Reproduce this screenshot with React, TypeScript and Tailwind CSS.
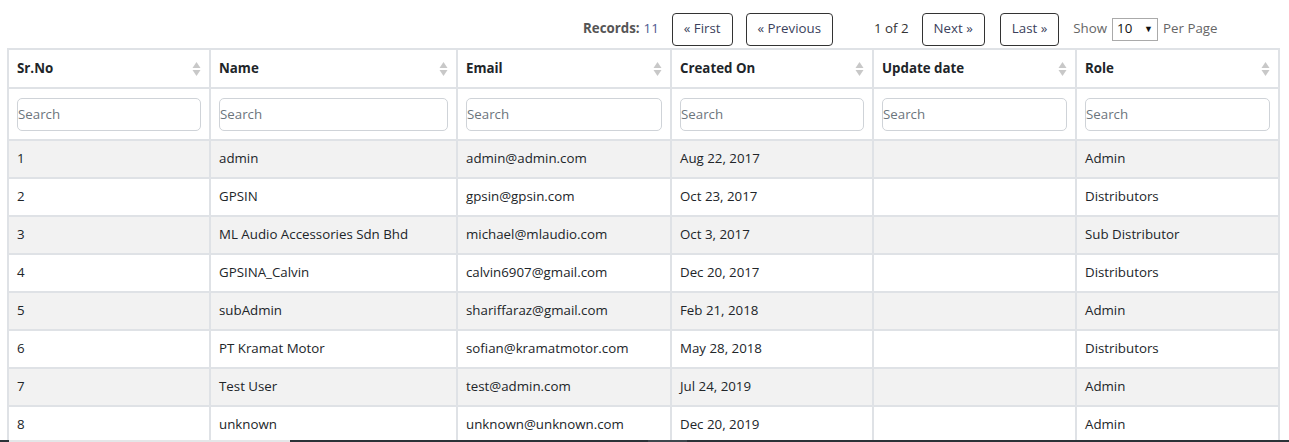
import React from "react";

const users = [
  { id: 1, name: "admin", email: "admin@admin.com", created: "Aug 22, 2017", updated: "", role: "Admin" },
  { id: 2, name: "GPSIN", email: "gpsin@gpsin.com", created: "Oct 23, 2017", updated: "", role: "Distributors" },
  { id: 3, name: "ML Audio Accessories Sdn Bhd", email: "michael@mlaudio.com", created: "Oct 3, 2017", updated: "", role: "Sub Distributor" },
  { id: 4, name: "GPSINA_Calvin", email: "calvin6907@gmail.com", created: "Dec 20, 2017", updated: "", role: "Distributors" },
  { id: 5, name: "subAdmin", email: "shariffaraz@gmail.com", created: "Feb 21, 2018", updated: "", role: "Admin" },
  { id: 6, name: "PT Kramat Motor", email: "sofian@kramatmotor.com", created: "May 28, 2018", updated: "", role: "Distributors" },
  { id: 7, name: "Test User", email: "test@admin.com", created: "Jul 24, 2019", updated: "", role: "Admin" },
  { id: 8, name: "unknown", email: "unknown@unknown.com", created: "Dec 20, 2019", updated: "", role: "Admin" },
];

const columns = [
  { label: "Sr.No", width: "w-[202px]" },
  { label: "Name", width: "w-[247px]" },
  { label: "Email", width: "w-[214px]" },
  { label: "Created On", width: "w-[202px]" },
  { label: "Update date", width: "w-[203px]" },
  { label: "Role", width: "w-[203px]" },
];

const SortIcon = () => (
  <svg width="9" height="16" viewBox="0 0 9 16" className="shrink-0">
    <path d="M4.5 1 L8.5 7 L0.5 7 Z" fill="#c8c8c8" />
    <path d="M4.5 15 L8.5 9 L0.5 9 Z" fill="#c8c8c8" />
  </svg>
);

const PagerButton = ({ children }: { children: React.ReactNode }) => (
  <button className="h-[33px] px-[11px] border border-[#333] rounded-[4px] bg-white text-[13.3px] text-[#3b3f5c]">
    {children}
  </button>
);

export default function App() {
  return (
    <div
      className="relative w-[1289px] h-[442px] overflow-hidden bg-white text-[#212529]"
      style={{ fontFamily: '"Open Sans", "Noto Sans", Arial, sans-serif' }}
    >
      {/* Pager */}
      <div className="flex items-center h-[48px] pt-[10px] pl-[583px] text-[13.3px]">
        <span className="font-bold text-[#555]">Records:</span>
        <span className="ml-1 text-[#4e5a8f]">11</span>
        <div className="ml-[13px]">
          <PagerButton>« First</PagerButton>
        </div>
        <div className="ml-[13px]">
          <PagerButton>« Previous</PagerButton>
        </div>
        <span className="ml-[41px] text-[#333]">1 of 2</span>
        <div className="ml-[13px]">
          <PagerButton>Next »</PagerButton>
        </div>
        <div className="ml-[15px]">
          <PagerButton>Last »</PagerButton>
        </div>
        <span className="ml-[14px] text-[#666]">Show</span>
        <div className="ml-[5px] flex items-center justify-between w-[46px] h-[23px] border border-[#aaa] px-1 text-[#111] bg-white">
          <span>10</span>
          <span className="text-[9px]">▼</span>
        </div>
        <span className="ml-[5px] text-[#666]">Per Page</span>
      </div>

      {/* Table */}
      <table className="ml-[7px] w-[1271px] table-fixed border-collapse text-[13.3px]">
        <thead>
          <tr>
            {columns.map((c) => (
              <th
                key={c.label}
                className={`${c.width} h-[39px] border-2 border-[#dfe2e6] px-2 text-left font-bold text-[#212529]`}
              >
                <div className="flex items-center justify-between">
                  <span>{c.label}</span>
                  <SortIcon />
                </div>
              </th>
            ))}
          </tr>
          <tr>
            {columns.map((c) => (
              <th key={c.label} className="h-[52px] border-2 border-[#dfe2e6] px-2 font-normal">
                <input
                  placeholder="Search"
                  className="w-full h-[33px] border border-[#cfd3d8] rounded-[5px] px-0 text-[13.3px] placeholder:text-[#6c757d] outline-none"
                />
              </th>
            ))}
          </tr>
        </thead>
        <tbody>
          {users.map((u, i) => (
            <tr key={u.id} className={i % 2 === 0 ? "bg-[#f2f2f2]" : "bg-white"}>
              {[u.id, u.name, u.email, u.created, u.updated, u.role].map((v, j) => (
                <td key={j} className="h-[38px] border-2 border-[#dfe2e6] px-2 text-[#212529]">
                  {v}
                </td>
              ))}
            </tr>
          ))}
        </tbody>
      </table>

      {/* bottom edge of the window */}
      <div className="absolute left-0 bottom-0 w-full h-[2px] flex">
        <div className="w-[9px] bg-[#2b3338]" />
        <div className="w-[281px] bg-[#e4e6e8]" />
        <div className="w-[358px] bg-[#2b3338]" />
        <div className="w-[39px] bg-[#3e484e]" />
        <div className="flex-1 bg-[#2b3338]" />
      </div>
    </div>
  );
}
